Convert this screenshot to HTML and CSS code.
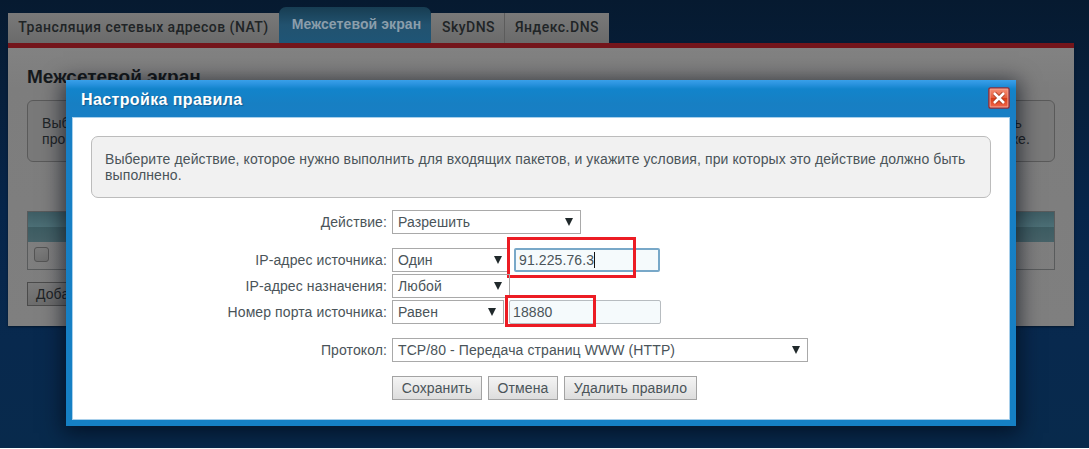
FILE: index.html
```html
<!DOCTYPE html>
<html lang="ru">
<head>
<meta charset="utf-8">
<title>Межсетевой экран</title>
<link rel="stylesheet" href="styles.css">
</head>
<body>
<div class="page">
  <nav class="tabs">
    <span class="tab tab-nat">Трансляция сетевых адресов (NAT)</span>
    <span class="tab tab-active">Межсетевой экран</span>
    <span class="tab tab-sky">SkyDNS</span>
    <span class="tab tab-yandex">Яндекс.DNS</span>
  </nav>
  <main class="panel">
    <h1 class="panel-title">Межсетевой экран</h1>
    <div class="panel-info">
      <div class="info-row"><span>Выб</span><span class="tail-first">ь</span></div>
      <div class="info-row"><span>про</span><span>же.</span></div>
    </div>
    <div class="table">
      <div class="table-head"></div>
      <div class="table-row"><span class="check"></span></div>
    </div>
    <div class="add-button">Добавить</div>
  </main>
</div>
<section class="dialog">
  <header class="dialog-head">
    <h2 class="dialog-title">Настройка правила</h2>
    <svg class="close" viewBox="0 0 22 22">
      <defs>
        <linearGradient id="red" x1="0" y1="0" x2="0" y2="1">
          <stop offset="0" stop-color="#f38b70"/><stop offset=".48" stop-color="#e65d3c"/>
          <stop offset=".5" stop-color="#d63a14"/><stop offset="1" stop-color="#ef6347"/>
        </linearGradient>
      </defs>
      <rect x=".9" y=".9" width="20.2" height="20.2" rx="1.5" fill="#f4a08c" stroke="#8f2f3a" stroke-width="1.4"/>
      <rect x="2.6" y="2.6" width="16.8" height="16.8" fill="url(#red)"/>
      <path d="M6.3 6.3l9.4 9.4M15.7 6.3l-9.4 9.4" stroke="#a33a20" stroke-width="4.2"/>
      <path d="M6 6l10 10M16 6L6 16" stroke="#fff" stroke-width="2.6"/>
    </svg>
  </header>
  <div class="dialog-body">
    <p class="hint"><span class="hint-line">Выберите действие, которое нужно выполнить для входящих пакетов, и укажите условия, при которых это действие должно быть</span><br>выполнено.</p>
    <div class="form">
      <div class="row row-action"><span class="label">Действие:</span><span class="select w-action">Разрешить</span></div>
      <div class="row"><span class="label">IP-адрес источника:</span><span class="select w-small">Один</span><span class="input input-ip">91.225.76.3<i class="caret"></i><b class="mark mark-ip"></b></span></div>
      <div class="row"><span class="label">IP-адрес назначения:</span><span class="select w-small">Любой</span></div>
      <div class="row row-port"><span class="label">Номер порта источника:</span><span class="select w-port">Равен</span><span class="input input-port">18880<b class="mark mark-port"></b></span></div>
      <div class="row row-proto"><span class="label">Протокол:</span><span class="select w-proto">TCP/80 - Передача страниц WWW (HTTP)</span></div>
      <div class="buttons"><span class="button b-save">Сохранить</span><span class="button b-cancel">Отмена</span><span class="button b-delete">Удалить правило</span></div>
    </div>
  </div>
</section>
</body>
</html>
```
FILE: styles.css
```css
* { box-sizing: border-box; }
html, body { margin: 0; height: 449px; overflow: hidden; }
body {
  position: relative;
  background: linear-gradient(#061a30 0, #071f3b 90px, #06254a 210px, #08294e 340px, #082a4c 448px, #fff 448px);
  font: 14px/16px "Liberation Sans", Arial, sans-serif;
  letter-spacing: .1px;
  color: #4a5459;
  white-space: nowrap;
}
.page { padding: 7px 15px 0 8px; }
.tabs { display: flex; align-items: flex-end; height: 36px; }
.tab {
  height: 30px;
  padding-top: 6px;
  background: linear-gradient(#797979, #6a6a6a);
  color: #202426;
  font: 500 14px/16px Roboto, sans-serif;
  text-align: center;
}
.tab-nat { width: 271px; letter-spacing: .47px; }
.tab-active {
  width: 152px;
  height: 36px;
  padding: 9px 0 0 3px;
  border-radius: 7px 7px 0 0;
  background: linear-gradient(#173d52, #22526f 50%, #1f5576);
  color: #8b9eab;
  font: bold 14px/16px "Liberation Sans", sans-serif;
  letter-spacing: .1px;
}
.tab-sky { width: 74px; padding-left: 2px; border-right: 1px solid #5c5c5c; letter-spacing: .5px; }
.tab-yandex { width: 104px; letter-spacing: .5px; }
.panel {
  height: 283px;
  padding: 19px 19px 0;
  border-top: 5px solid #74151b;
  background: linear-gradient(#828282, #7d7d7d 40px, #7f7f7f);
  color: #202427;
  box-shadow: 0 1px 2px #05182c;
}
.panel-title { margin: 0; font: bold 19px/20px "Liberation Sans", sans-serif; letter-spacing: 0; color: #15191c; }
.panel-info { height: 62px; margin-top: 13px; padding: 14px 24px 0 14px; border: 1px solid #5a5a5a; border-radius: 6px; background: #797979; }
.info-row { display: flex; justify-content: space-between; }
.tail-first { margin-right: 8px; }
.table { margin-top: 49px; border: 1px solid #595b5c; }
.table-head { height: 30px; background: linear-gradient(#3e5d64, #4c6f76 50%, #3d5c62 51%, #466268); }
.table-row { height: 27px; padding: 5px 0 0 6px; }
.check { display: block; width: 15px; height: 15px; border: 1px solid #555; border-radius: 3px; background: linear-gradient(#7c7c7c, #707070); }
.add-button { width: 75px; height: 24px; margin-top: 12px; padding: 3px 8px; border: 1px solid #4b4b4b; background: linear-gradient(#7b7b7b, #6c6c6c); }
.dialog {
  position: absolute;
  left: 66px;
  top: 80px;
  width: 950px;
  height: 346px;
  padding: 0 6px 6px;
  background: linear-gradient(#39a0e9 0, #2a93df 4px, #1284cb 9px, #177fc3 24px, #187fc5 36px, #1580c4);
  box-shadow: 0 4px 20px 3px rgba(0, 8, 20, .65);
}
.dialog-head { display: flex; justify-content: space-between; height: 37px; padding: 7px 0 0 9px; }
.dialog-title { margin: 0; font: bold 16px/25px "Liberation Sans", sans-serif; letter-spacing: .38px; color: #fff; text-shadow: 1px 1px 1px #125c91; }
.close { width: 22px; height: 22px; }
.dialog-body { height: 303px; padding: 18px 18px 0; border: 1px solid #a9d0eb; background: #fff; }
.hint { height: 62px; margin: 0; padding: 14px 13px; border: 1px solid #bcbcbc; border-radius: 7px; background: #f1f1f1; }
.form { padding-top: 12px; }
.row { display: flex; height: 24px; margin-bottom: 2px; line-height: 24px; }
.row-action, .row-port, .row-proto { margin-bottom: 14px; }
.label { width: 296px; margin-right: 5px; text-align: right; }
.select { position: relative; padding-left: 5px; border: 1px solid #a9a9a9; line-height: 22px; }
.select::after { content: ""; position: absolute; right: 7px; top: 7px; border: 4px solid transparent; border-top: 8px solid #20292b; border-bottom: 0; }
.w-action { width: 189px; }
.w-small { width: 118px; }
.w-port { width: 112px; }
.w-proto { width: 416px; }
.input { position: relative; border: 1px solid #b7bcc0; border-radius: 2px; background: #f5fafc; line-height: 22px; }
.input-ip { width: 146px; margin-left: 4px; padding-left: 3px; border: 2px solid #78a8c8; line-height: 20px; }
.input-port { width: 152px; margin-left: 5px; padding-left: 3px; }
.caret { position: absolute; left: 78px; top: 2px; width: 1px; height: 16px; background: #111; }
.mark { position: absolute; border: 3px solid #ec1c24; }
.mark-ip { left: -9px; top: -13px; width: 129px; height: 41px; }
.mark-port { left: -5px; top: -6px; width: 91px; height: 32px; }
.buttons { display: flex; gap: 6px; margin-left: 301px; }
.button { height: 24px; border: 1px solid #a3a3a3; background: linear-gradient(#f4f4f4, #dddddd); text-align: center; line-height: 22px; }
.b-save { width: 90px; }
.b-cancel { width: 70px; }
.b-delete { width: 133px; }
```
